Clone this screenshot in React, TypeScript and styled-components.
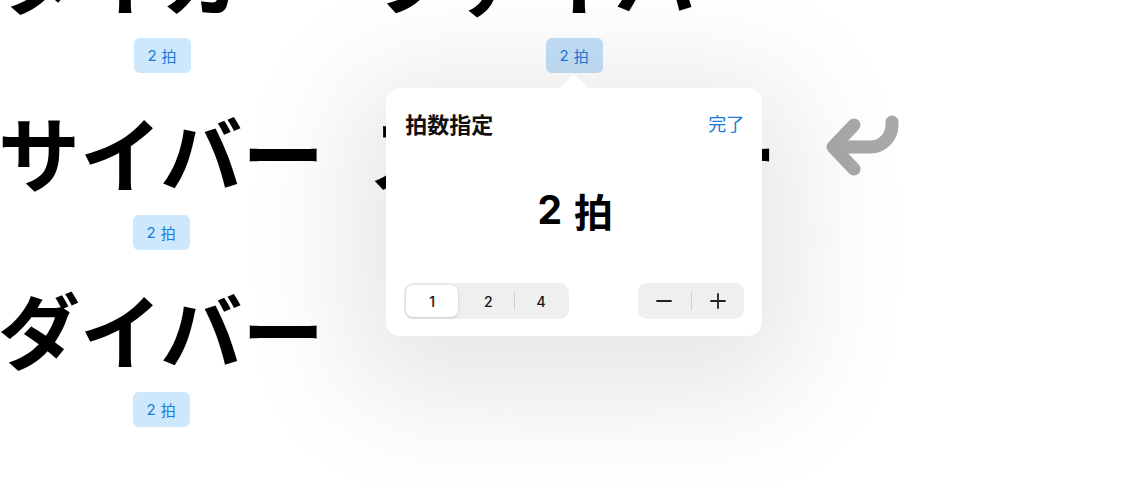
import React from 'react'
import styled, { createGlobalStyle } from 'styled-components'

const GlobalStyle = createGlobalStyle`
  html, body {
    margin: 0;
    padding: 0;
    background: #ffffff;
  }
  body {
    font-family: Inter, "Noto Sans CJK JP", "Noto Sans", sans-serif;
    overflow: hidden;
  }
`

const Sheet = styled.div`
  width: 1122px;
  height: 482px;
  overflow: hidden;
`

const Lines = styled.div`
  display: flex;
  flex-direction: column;
  margin-top: -76px;
  margin-left: -2px;
`

const Line = styled.div`
  display: flex;
  align-items: flex-start;
  gap: 44px;
  height: 177px;
  flex-shrink: 0;
`

const Word = styled.div`
  display: flex;
  flex-direction: column;
  align-items: center;
`

const Lyric = styled.div`
  font-family: "Noto Sans CJK JP", sans-serif;
  font-size: 82px;
  font-weight: 700;
  line-height: 100px;
  height: 100px;
  color: #000;
  white-space: nowrap;
`

const BeatAnchor = styled.div`
  position: relative;
  margin-top: 14px;
`

const Beat = styled.div<{ $active?: boolean }>`
  display: flex;
  align-items: center;
  justify-content: center;
  gap: 5px;
  width: 57px;
  height: 35px;
  border-radius: 6px;
  background: ${p => (p.$active ? '#c3e0f8' : '#cde7fc')};
  color: #1c7ad8;
  font-size: 15px;
  font-weight: 400;
  cursor: pointer;
`

const ReturnMark = styled.svg`
  width: 85px;
  height: 100px;
  flex-shrink: 0;
`

const Popover = styled.div`
  position: absolute;
  top: calc(100% + 15px);
  left: 50%;
  transform: translateX(-50%);
  z-index: 10;
  width: 376px;
  height: 248px;
  box-sizing: border-box;
  padding: 22px 18px 17px 18px;
  background: #fff;
  border-radius: 14px;
  box-shadow: 0 26px 120px 34px rgba(0, 0, 0, 0.1);
  display: flex;
  flex-direction: column;

  &::before {
    content: '';
    position: absolute;
    top: -13px;
    left: 50%;
    width: 30px;
    height: 14px;
    transform: translateX(-50%);
    background: #fff;
    clip-path: polygon(0 100%, 44% 6%, 50% 0, 56% 6%, 100% 100%);
  }
`

const PopHeader = styled.div`
  display: flex;
  align-items: center;
  justify-content: space-between;
  height: 26px;
`

const PopTitle = styled.div`
  font-family: "Noto Sans CJK JP", sans-serif;
  font-size: 22px;
  font-weight: 700;
  color: #111;
  padding-left: 1px;
`

const DoneButton = styled.div`
  font-family: "Noto Sans CJK JP", sans-serif;
  font-size: 18px;
  color: #1c7ad8;
  cursor: pointer;
`

const Value = styled.div`
  flex: 1;
  display: flex;
  align-items: center;
  justify-content: center;
  gap: 12px;
  font-size: 39px;
  font-weight: 700;
  color: #000;
  padding-left: 2px;
`

const ValueUnit = styled.span`
  font-family: "Noto Sans CJK JP", sans-serif;
  font-weight: 700;
`

const Controls = styled.div`
  display: flex;
  align-items: center;
  justify-content: space-between;
`

const Segmented = styled.div`
  display: flex;
  align-items: center;
  width: 165px;
  height: 36px;
  box-sizing: border-box;
  padding: 2px;
  border-radius: 9px;
  background: #efeff0;
`

const Segment = styled.div<{ $selected?: boolean }>`
  flex: 1;
  height: 32px;
  display: flex;
  align-items: center;
  justify-content: center;
  font-size: 14px;
  font-weight: 500;
  color: #111;
  border-radius: 7px;
  background: ${p => (p.$selected ? '#fff' : 'transparent')};
  box-shadow: ${p => (p.$selected ? '0 1px 3px rgba(0,0,0,0.14), 0 0 0 0.5px rgba(0,0,0,0.05)' : 'none')};
  margin-right: ${p => (p.$selected ? '4px' : '0')};
  cursor: pointer;
`

const Divider = styled.div`
  width: 1px;
  height: 18px;
  background: #cfcfd2;
  flex-shrink: 0;
`

const Stepper = styled.div`
  display: flex;
  align-items: center;
  width: 106px;
  height: 36px;
  border-radius: 9px;
  background: #efeff0;
`

const StepButton = styled.div`
  flex: 1;
  height: 36px;
  display: flex;
  align-items: center;
  justify-content: center;
  cursor: pointer;
`

const Glyph = styled.svg`
  width: 18px;
  height: 18px;
`

const lines: { words: string[]; ret: boolean }[] = [
  { words: ['タイガー', 'ファイバー'], ret: true },
  { words: ['サイバー', 'スナイパー'], ret: true },
  { words: ['ダイバー'], ret: false },
]

function Return() {
  return (
    <ReturnMark viewBox="0 0 85 100" fill="none">
      <path
        d="M71 21 V24 A22 22 0 0 1 49 46 H12 M33 24 L12 46 L33 68"
        stroke="#a8a8a8"
        strokeWidth="13"
        strokeLinecap="round"
        strokeLinejoin="round"
      />
    </ReturnMark>
  )
}

function BeatPopover() {
  return (
    <Popover>
      <PopHeader>
        <PopTitle>拍数指定</PopTitle>
        <DoneButton>完了</DoneButton>
      </PopHeader>
      <Value>
        <span>2</span>
        <ValueUnit>拍</ValueUnit>
      </Value>
      <Controls>
        <Segmented>
          <Segment $selected>1</Segment>
          <Segment>2</Segment>
          <Divider />
          <Segment>4</Segment>
        </Segmented>
        <Stepper>
          <StepButton>
            <Glyph viewBox="0 0 18 18">
              <path d="M2 9 H16" stroke="#222" strokeWidth="1.8" strokeLinecap="round" />
            </Glyph>
          </StepButton>
          <Divider />
          <StepButton>
            <Glyph viewBox="0 0 18 18">
              <path d="M2 9 H16 M9 2 V16" stroke="#222" strokeWidth="1.8" strokeLinecap="round" />
            </Glyph>
          </StepButton>
        </Stepper>
      </Controls>
    </Popover>
  )
}

export default function App() {
  return (
    <Sheet>
      <GlobalStyle />
      <Lines>
        {lines.map((line, li) => (
          <Line key={li}>
            {line.words.map((w, wi) => {
              const open = li === 0 && wi === 1
              return (
                <Word key={wi}>
                  <Lyric>{w}</Lyric>
                  <BeatAnchor>
                    <Beat $active={open}>
                      <span>2</span>
                      <span>拍</span>
                    </Beat>
                    {open && <BeatPopover />}
                  </BeatAnchor>
                </Word>
              )
            })}
            {line.ret && <Return />}
          </Line>
        ))}
      </Lines>
    </Sheet>
  )
}
